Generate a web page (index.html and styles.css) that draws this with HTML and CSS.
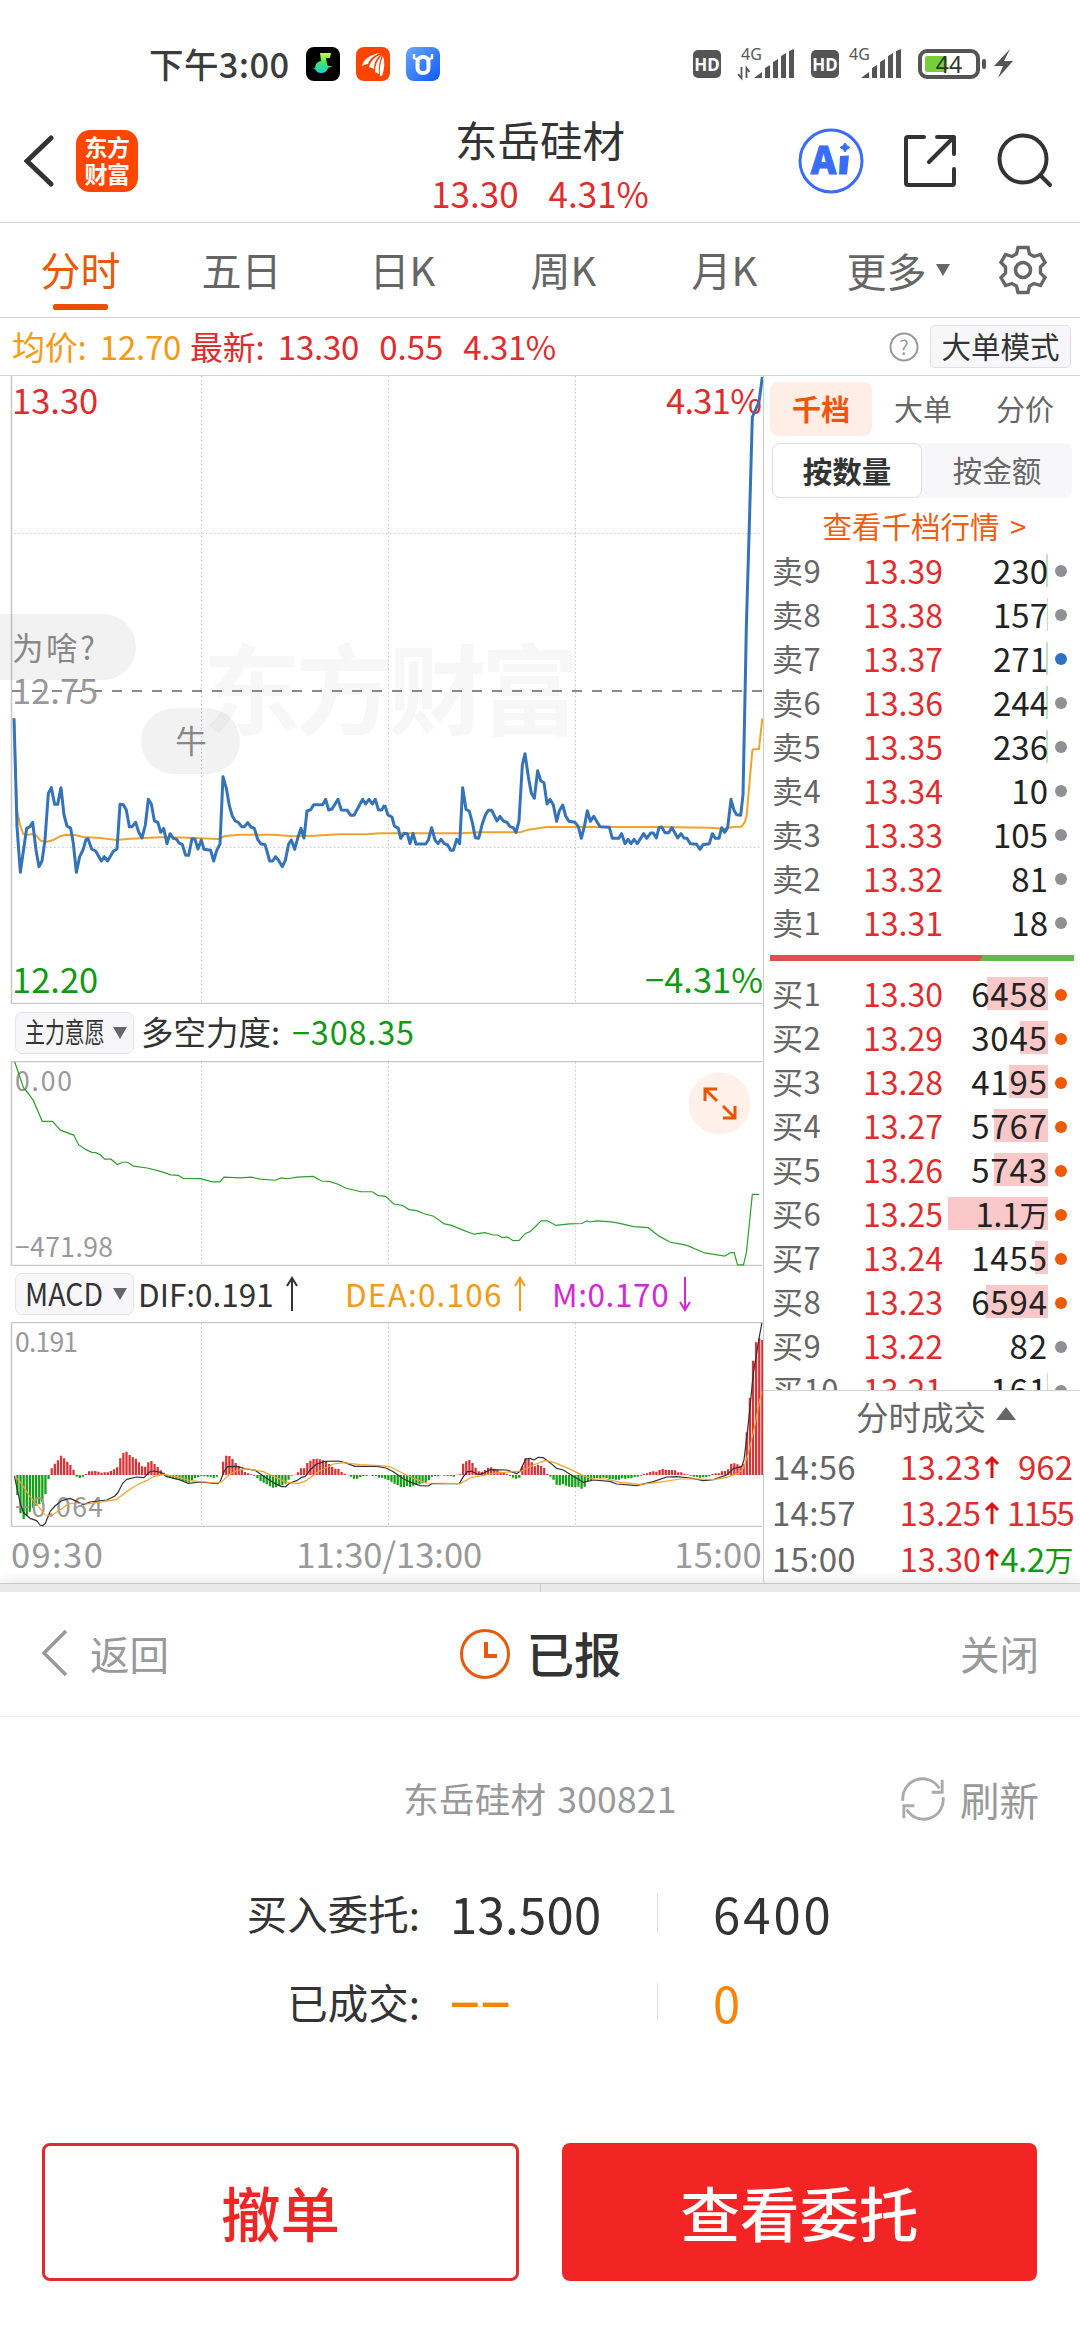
FILE: index.html
```html
<!DOCTYPE html>
<html lang="zh-CN">
<head>
<meta charset="utf-8">
<title>东岳硅材 300821</title>
<link rel="stylesheet" href="styles.css">
</head>
<body>
<div class="statusbar">
  <span class="clock">下午3:00</span>
  <svg class="app" viewBox="0 0 34 34"><defs><linearGradient id="gm" x1="0" y1="0" x2="0" y2="1"><stop offset="0" stop-color="#d4f53c"/><stop offset=".5" stop-color="#3be860"/><stop offset="1" stop-color="#22c8f0"/></linearGradient></defs><rect width="34" height="34" rx="8" fill="#000"/><path d="M14 6h11l-1 5h-4l1 6 1 2h5l-5 2a7 7 0 0 1-13 1l-3-1h3a7 7 0 0 1 6-7z" fill="url(#gm)"/></svg>
  <svg class="app" viewBox="0 0 34 34"><rect width="34" height="34" rx="8" fill="#ff4400"/><path d="M6 19Q8 9 24 6 14 10 12 17q-3 0-6 2zM13 20Q15 12 25 7 18 13 18 22zM19 25q0-10 7-17-4 9-3 19zM24 29q-1-11 3-20 3 9-1 20z" fill="#fff"/></svg>
  <svg class="app" viewBox="0 0 34 34"><defs><linearGradient id="gb" x1="0" y1="0" x2="1" y2="1"><stop offset="0" stop-color="#6aa6fb"/><stop offset="1" stop-color="#0d5bf2"/></linearGradient></defs><rect width="34" height="34" rx="8" fill="url(#gb)"/><path d="M8 7v4q4 1 4 5M26 7v4q-4 1-4 5" fill="none" stroke="#fff" stroke-width="2.400"/><rect x="11.500" y="10" width="11" height="16" rx="5" fill="none" stroke="#fff" stroke-width="4"/></svg>
  <span class="grow"></span>
  <span class="hd">HD</span>
  <svg class="sig first" viewBox="0 -8 58 50"><text x="4" y="13">4G</text><path d="M4.500 21v10M1 27l3.500 4V20M9.500 31V21l3 4" fill="none" stroke="#555" stroke-width="1.800"/><path d="M17 31l8-6v6zM28 31V21l5-3v13zM36 31V15l5-3v19zM44 31V9l5-3v25zM52 31V4l5-2v29z"/></svg>
  <span class="hd">HD</span>
  <svg class="sig second" viewBox="0 -8 54 50"><text x="0" y="13">4G</text><path d="M12 31l8-6v6zM23 31V21l5-3v13zM31 31V15l5-3v19zM39 31V9l5-3v25zM47 31V4l5-2v29z"/></svg>
  <svg class="batt" viewBox="0 0 96 32"><rect x="2" y="3" width="58" height="26" rx="7" fill="none" stroke="#555" stroke-width="4"/><rect x="7" y="8" width="22" height="16" rx="2" fill="#76ce3b"/><rect x="64" y="11" width="4" height="10" rx="2" fill="#555"/><path d="M92 1L76 18h9l-5 12 15-17h-9z" fill="#555"/><text x="31" y="25" text-anchor="middle">44</text></svg>
</div>

<header class="header">
  <svg class="back" viewBox="0 0 30 52"><path d="M27 3L3 26 27 49" fill="none" stroke="#333" stroke-width="5" stroke-linecap="round"/></svg>
  <div class="logo">东方<br>财富</div>
  <div class="title"><h1>东岳硅材</h1><p><span>13.30</span><span>4.31%</span></p></div>
  <svg class="actions" viewBox="0 0 260 66">
    <circle cx="37" cy="33" r="31" fill="none" stroke="#3a6cf4" stroke-width="3"/>
    <text x="17" y="46" class="ai">A</text><path d="M46 28l9-.5-2 19h-8z" fill="#3a6cf4"/><path d="M51 15q1.500 3.500 5 4.500-3.500 1-5 4.500-1.500-3.500-5-4.500 3.500-1 5-4.500z" fill="#3a6cf4" stroke="#3a6cf4"/>
    <g fill="none" stroke="#333" stroke-width="4" stroke-linecap="round" stroke-linejoin="round"><path d="M130 9h-16q-2 0-2 2v44q0 2 2 2h44q2 0 2-2V41M143 9h17v17M159 10L135 34"/><circle cx="229" cy="31" r="23.500"/><path d="M246 47l10 10"/></g>
  </svg>
</header>

<nav class="tabs">
  <span class="tab on">分时</span><span class="tab">五日</span><span class="tab">日K</span><span class="tab">周K</span><span class="tab">月K</span><span class="tab more">更多<i class="tri"></i></span>
  <svg class="gear" viewBox="-25 -25 50 50"><path d="M-5-22.500H5L6.500-16 11-13.500 17.500-15.500 22-7.500 17.500-3V3L22 7.500 17.500 15.500 11 13.500 6.500 16 5 22.500H-5L-6.500 16-11 13.500-17.500 15.500-22 7.500-17.500 3V-3L-22-7.500-17.500-15.500-11-13.500-6.500-16z" fill="none" stroke="#666" stroke-width="3.400"/><circle r="7.500" fill="none" stroke="#666" stroke-width="3.600"/></svg>
</nav>

<div class="quote">
  <span class="avg">均价: 12.70</span><span class="last">最新: 13.30</span><span class="chg">0.55</span><span class="pct">4.31%</span>
  <span class="grow"></span>
  <svg class="help" viewBox="0 0 30 30"><circle cx="15" cy="15" r="13.500" fill="none" stroke="#999" stroke-width="2"/><text x="15" y="22.500" text-anchor="middle">?</text></svg>
  <span class="mode">大单模式</span>
</div>

<main class="main">
  <section class="charts">
    <svg class="c1" viewBox="0 376 763 628">
      <text class="wm" x="391" y="727" text-anchor="middle" textLength="376">东方财富</text>
      <g class="grid"><path d="M201.500 376V1003M388.500 376V1003M575.500 376V1003M14 533.500H762M14 847.500H762"/></g>
      <path class="frame" d="M11.500 376V1003.500H762"/>
      <path d="M12 691H762" stroke="#888" stroke-width="2" stroke-dasharray="10 10"/>
      <text class="ax gray" x="12" y="704">12.75</text>
      <text class="ax red" x="12" y="414">13.30</text>
      <text class="ax red" x="762" y="414" text-anchor="end" textLength="96">4.31%</text>
      <text class="ax green" x="12" y="993">12.20</text>
      <text class="ax green" x="763" y="993" text-anchor="end">−4.31%</text>
      <g class="bubble"><rect x="-40" y="614" width="176" height="66" rx="33"/><text x="12" y="660" textLength="83">为啥?</text><rect x="141" y="708" width="99" height="66" rx="33"/><text x="191" y="753" text-anchor="middle">牛</text></g>
      <g class="avgline">
        <polyline transform="translate(0 680) scale(.33333)" points="42,115 51,390 60,435 70,462 80,465 98,462 110,468 122,482 140,485 158,481 180,469 200,464 225,465 250,471 300,474 350,480 390,476 480,472 520,472 600,475 655,477 675,468 720,464 820,464 880,469 940,467 1020,463 1100,463 1140,460 1200,460"/>
        <polyline transform="translate(380 680) scale(.33333)" points="60,460 240,460 300,457 420,457 445,449 500,441 840,441 990,443 1030,446 1060,441 1085,440 1095,425 1100,405 1117,212 1120,208 1137,207 1147,115"/>
      </g>
      <g class="priceline">
        <polyline transform="translate(0 680) scale(.33333)" points="42,115 51,440 61,577 80,445 90,440 98,427 108,510 117,560 126,543 135,480 145,340 154,323 164,373 173,373 183,323 192,405 201,438 212,445 220,490 229,577 239,530 249,510 258,478 264,476 275,507 287,513 304,543 313,530 323,543 340,514 351,507 360,373 370,374 379,390 388,440 396,440 407,427 416,456 426,474 436,435 445,358 454,372 463,422 474,428 482,457 491,445 501,491 510,461 520,475 530,478 537,489 547,494 557,526 566,526 576,476 585,478 594,507 604,480 612,508 632,511 641,543 650,512 660,492 669,290 679,325 688,377 697,408 706,423 715,427 725,440 733,440 743,428 753,441 763,445 773,478 782,491 795,494 800,510 809,543 818,543 827,530 837,543 847,560 856,541 866,492 874,480 884,508 893,475 903,445 912,474 921,393 932,389 941,374 968,374 977,358 986,390 996,387 1014,358 1024,390 1042,391 1052,406 1062,406 1088,358 1097,372 1107,358 1117,372 1126,358 1135,389 1145,390 1154,375"/>
        <polyline transform="translate(380 680) scale(.33333)" points="14,375 24,405 36,411 43,438 55,445 62,475 72,460 82,461 90,491 99,460 108,492 137,492 145,480 155,443 165,480 174,491 183,478 193,491 203,495 212,511 220,511 230,478 239,491 248,323 258,388 268,394 277,428 286,473 296,475 306,435 316,405 325,391 335,391 351,423 360,409 370,423 381,427 390,440 400,443 408,457 417,423 427,255 435,221 445,290 454,340 463,355 473,272 482,302 492,308 501,372 510,358 520,375 530,424 538,392 548,375 557,408 567,424 585,427 595,440 604,475 613,440 622,392 631,424 641,409 660,440 688,442 697,475 716,475 725,461 735,491 744,478 753,491 762,478 772,491 791,461 800,475 812,459 820,459 829,474 837,443 845,441 855,458 866,458 876,443 893,474 903,461 912,474 921,475 931,491 950,493 960,508 969,494 988,491 997,461 1006,475 1017,475 1025,443 1034,457 1043,443 1053,358 1062,391 1070,404 1082,406 1089,345 1096,0 1099,-159 1108,-465 1117,-789 1137,-834 1147,-909"/>
      </g>
    </svg>

    <div class="ind">
      <span class="pick"><b class="cjk">主力意愿</b><i class="tri"></i></span>
      <span class="lbl">多空力度:</span><span class="green">−308.35</span>
    </div>
    <svg class="c2" viewBox="0 1061 763 205">
      <path class="frame" d="M762 1061.500H11.500V1265.500H762"/>
      <g class="grid"><path d="M201.500 1062V1265M388.500 1062V1265M575.500 1062V1265"/></g>
      <circle cx="719.500" cy="1103.500" r="31" fill="#fff0e9"/>
      <path d="M705 1101v-12h12M706 1090l11 11M735 1106v12h-12M734 1117l-11-11" fill="none" stroke="#ea5504" stroke-width="3"/>
      <text class="sm" x="15" y="1091" textLength="57">0.00</text><text class="sm" x="15" y="1257" textLength="98">−471.98</text>
      <polyline class="force" transform="translate(0 1000) scale(.49107 .3827)" points="30,162 48,230 57,243 68,263 86,317 107,317 123,340 150,353 160,378 175,391 187,398 195,399 205,405 213,416 226,416 239,430 250,424 260,424 272,434 300,439 325,447 348,457 363,458 373,466 408,467 432,475 448,475 456,463 490,465 512,463 530,468 560,471 573,465 585,467 605,463 638,461 655,473 670,474 690,482 705,492 735,501 758,501 770,511 785,513 802,533 820,537 832,547 850,551 862,558 883,565 905,585 920,589 940,600 965,612 987,608 1005,614 1014,614 1023,621 1033,619 1045,629 1057,628 1070,610 1080,605 1102,577 1115,577 1132,589 1160,585 1185,584 1195,577 1202,580 1215,577 1245,580 1260,583 1290,592 1320,595 1342,617 1365,633 1387,638 1400,642 1435,661 1476,669 1488,660 1495,660 1502,692 1514,692 1520,660 1532,508 1546,508"/>
    </svg>

    <div class="ind macd">
      <span class="pick"><b class="lat">MACD</b><i class="tri"></i></span>
      <span class="dif">DIF:0.191</span><svg class="arr" viewBox="0 0 14 36"><path d="M7 35V2M2 10l5-8 5 8" stroke="#333"/></svg>
      <span class="dea">DEA:0.106</span><svg class="arr" viewBox="0 0 14 36"><path d="M7 35V2M2 10l5-8 5 8" stroke="#f39a16"/></svg>
      <span class="mm">M:0.170</span><svg class="arr" viewBox="0 0 14 36"><path d="M7 1v33M2 26l5 8 5-8" stroke="#d428d4"/></svg>
    </div>
    <svg class="c3" viewBox="0 1322 763 205">
      <path class="frame" d="M762 1322.500H11.500V1526.500H762"/>
      <g class="grid"><path d="M201.500 1323V1526M388.500 1323V1526M575.500 1323V1526"/></g>
      <text class="sm" x="15" y="1352" textLength="63">0.191</text>
      <path id="up" fill="none" stroke="#d83438" stroke-width="2.300"/><path id="down" fill="none" stroke="#15a015" stroke-width="2.300"/>
      <text class="sm" x="15" y="1517" textLength="88">−0.064</text>
      <g class="thin black">
        <polyline transform="translate(0 1380) scale(.33333)" points="43,287 52,330 62,375 72,400 90,415 110,422 120,435 128,437 136,430 150,395 165,378 185,362 210,355 225,362 250,374 270,366 320,360 345,348 355,336 368,310 380,298 410,291 432,293 448,276 462,273 485,278 500,290 540,300 565,310 600,306 652,311 660,305 672,275 683,260 710,259 740,267 765,271 790,288 820,308 845,320 857,320 870,309 890,302 905,292 915,290 930,270 950,252 975,244 1015,243 1035,248 1065,259 1130,259 1158,264"/>
        <polyline transform="translate(380 1310) scale(.33333)" points="18,474 40,485 70,506 90,516 120,527 145,528 155,521 238,521 250,500 262,485 275,484 295,494 310,490 330,479 380,480 410,491 420,484 437,447 450,445 462,450 475,442 490,443 510,458 530,475 550,480 570,493 590,505 610,517 640,510 690,514 710,522 770,527 820,515 860,501 890,500 930,504 970,512 1000,509 1040,495 1060,476 1085,470 1092,450 1105,340 1120,190 1137,85 1146,38"/>
      </g>
      <g class="thin orange">
        <polyline transform="translate(0 1380) scale(.33333)" points="43,287 60,305 90,350 120,385 135,405 155,406 180,390 205,372 225,369 260,372 300,366 330,362 350,358 390,328 420,310 440,302 460,290 490,283 530,290 570,302 650,309 665,305 690,282 710,272 740,266 790,275 840,298 865,308 895,311 920,301 960,272 1000,252 1030,248 1080,254 1140,257 1170,260"/>
        <polyline transform="translate(380 1310) scale(.33333)" points="30,470 60,485 100,505 140,519 240,521 275,502 300,498 340,490 400,485 425,483 460,465 495,452 515,455 560,473 610,497 640,507 680,507 720,517 780,523 830,518 900,507 960,507 1000,509 1040,502 1075,490 1090,475 1105,430 1125,345 1137,280 1146,244"/>
      </g>
    </svg>
    <div class="times"><span class="t0">09:30</span><span>11:30/13:00</span><span class="t1">15:00</span></div>
  </section>

  <aside class="book">
    <div class="btabs"><span class="on">千档</span><span>大单</span><span>分价</span></div>
    <div class="seg"><span class="on">按数量</span><span>按金额</span></div>
    <div class="link">查看千档行情 <i>&gt;</i></div>
    <div class="rows sell">
      <div class="row"><span>卖9</span><em>13.39</em><b><i style="width:2px"></i>230</b><u></u></div>
      <div class="row"><span>卖8</span><em>13.38</em><b><i style="width:1px"></i>157</b><u></u></div>
      <div class="row"><span>卖7</span><em>13.37</em><b><i style="width:2px"></i>271</b><u class="bl"></u></div>
      <div class="row"><span>卖6</span><em>13.36</em><b><i style="width:2px"></i>244</b><u></u></div>
      <div class="row"><span>卖5</span><em>13.35</em><b><i style="width:2px"></i>236</b><u></u></div>
      <div class="row"><span>卖4</span><em>13.34</em><b>10</b><u></u></div>
      <div class="row"><span>卖3</span><em>13.33</em><b>105</b><u></u></div>
      <div class="row"><span>卖2</span><em>13.32</em><b>81</b><u></u></div>
      <div class="row"><span>卖1</span><em>13.31</em><b>18</b><u></u></div>
    </div>
    <div class="ratio"></div>
    <div class="rows buy">
      <div class="row"><span>买1</span><em>13.30</em><b><i style="width:61px"></i>6458</b><u class="or"></u></div>
      <div class="row"><span>买2</span><em>13.29</em><b><i style="width:28px"></i>3045</b><u class="or"></u></div>
      <div class="row"><span>买3</span><em>13.28</em><b><i style="width:39px"></i>4195</b><u class="or"></u></div>
      <div class="row"><span>买4</span><em>13.27</em><b><i style="width:54px"></i>5767</b><u class="or"></u></div>
      <div class="row"><span>买5</span><em>13.26</em><b><i style="width:54px"></i>5743</b><u class="or"></u></div>
      <div class="row"><span>买6</span><em>13.25</em><b class="wan"><i style="width:100px"></i>1.1<small>万</small></b><u class="or"></u></div>
      <div class="row"><span>买7</span><em>13.24</em><b><i style="width:13px"></i>1455</b><u class="or"></u></div>
      <div class="row"><span>买8</span><em>13.23</em><b><i style="width:62px"></i>6594</b><u class="or"></u></div>
      <div class="row"><span>买9</span><em>13.22</em><b>82</b><u></u></div>
      <div class="row"><span>买10</span><em>13.21</em><b><i style="width:1px"></i>161</b><u></u></div>
    </div>
    <div class="deals">
      <div class="dh">分时成交<i></i></div>
      <div class="deal"><span>14:56</span><em>13.23</em><svg viewBox="0 0 16 24"><path d="M8 23V3M2 9l6-6 6 6"/></svg><b>962</b></div>
      <div class="deal"><span>14:57</span><em>13.25</em><svg viewBox="0 0 16 24"><path d="M8 23V3M2 9l6-6 6 6"/></svg><b class="tight">1155</b></div>
      <div class="deal"><span>15:00</span><em>13.30</em><svg viewBox="0 0 16 24"><path d="M8 23V3M2 9l6-6 6 6"/></svg><b class="green">4.2<small>万</small></b></div>
    </div>
  </aside>
</main>
<div class="shade"><i></i></div>

<section class="sheet">
  <div class="shead">
    <span class="ret"><svg viewBox="0 0 28 50"><path d="M25 3L3 25 25 47" fill="none" stroke="#999" stroke-width="3.500"/></svg>返回</span>
    <span class="state"><svg viewBox="0 0 52 52"><circle cx="26" cy="26" r="23.500" fill="none" stroke="#e8590c" stroke-width="3"/><path d="M27 14v14h11" fill="none" stroke="#e8590c" stroke-width="4"/></svg><b>已报</b></span>
    <span class="close">关闭</span>
  </div>
  <div class="stock">
    <span class="name">东岳硅材 300821</span>
    <span class="refresh"><svg viewBox="0 0 48 48"><path d="M3 26A20.500 20.500 0 0 1 41 13M44 4v13H33M45 22A20.500 20.500 0 0 1 7 35M4 44V31h11" fill="none" stroke="#aaa" stroke-width="3"/></svg>刷新</span>
  </div>
  <div class="order"><span>买入委托:</span><b>13.500</b><i></i><b>6400</b></div>
  <div class="order done"><span>已成交:</span><b class="dash">−−</b><i></i><b>0</b></div>
  <div class="btns"><button class="cancel">撤单</button><button class="view">查看委托</button></div>
</section>
<script src="bars.js"></script>
</body>
</html>
```

FILE: bars.js
```js
// MACD histogram, one value per trading minute (thirds of a pixel above the zero line)
const macd = [0,-60,-115,-132,-122,-110,-98,-92,-88,-80,-57,-12,20,34,44,58,50,40,30,16,
-5,-9,-5,3,11,11,12,10,7,8,8,12,17,23,50,66,70,60,53,49,38,26,25,38,42,33,24,14,7,-5,-8,-10,-13,-15,-18,-20,-22,-16,-9,-7,
-3,-4,-5,-5,-8,-5,0,40,58,57,48,36,27,16,9,5,2,-3,-10,-18,-23,-28,-34,-38,-37,-33,-31,-26,-14,-2,1,8,20,20,36,43,48,49,47,44,
41,33,24,19,18,9,4,1,-5,-11,-11,-6,-3,-3,-1,-3,-3,-8,-8,-11,-15,-20,-26,-31,-36,-36,-33,-36,-32,-30,-27,-25,-23,-16,-5,-3,-4,-1,-2,-2,
-3,-5,1,2,34,41,45,36,22,11,10,15,22,23,19,15,10,7,3,-3,-8,-11,-8,26,50,49,38,26,31,27,21,3,-5,-14,-29,-31,-28,-32,-35,-36,
-36,-35,-41,-35,-18,-15,-10,-9,-10,-8,-9,-12,-13,-14,-14,-10,-11,-10,-10,-6,-5,-2,3,5,9,11,10,15,18,16,15,15,14,8,8,4,2,-2,-5,-6,
-8,-7,-6,-4,3,5,5,11,12,17,34,35,32,28,32,128,232,343,398,410,405];
const zero = 1475;
let up = "", down = "";
macd.forEach((v, i) => {
  if (!v) return;
  const bar = `M${(14.3 + 3.117 * i).toFixed(2)} ${zero}V${(zero - v / 3).toFixed(1)}`;
  if (v > 0) up += bar; else down += bar;
});
document.getElementById("up").setAttribute("d", up);
document.getElementById("down").setAttribute("d", down);
```

FILE: styles.css
```css
* { box-sizing: border-box; margin: 0; padding: 0; }
body { width: 1080px; height: 2340px; background: #fff; color: #333; font-family: "Noto Sans CJK SC", "Noto Sans", sans-serif; overflow: hidden; line-height: 1; }
svg { display: block; flex: none; }
i, em, u { font-style: normal; text-decoration: none; }
span, b, em { white-space: nowrap; }
.grow { flex: 1; }
.green { color: #129912; }

.statusbar { display: flex; align-items: center; height: 100px; padding: 28px 0 0 149px; }
.clock { width: 157px; font-size: 34.500px; color: #3c3c3c; line-height: 60px; font-weight: 500; letter-spacing: .4px; margin-top: -2px; }
.app { width: 34px; height: 34px; margin-right: 16px; }
.hd { width: 28px; height: 28px; border-radius: 5px; background: #555; color: #fff; font: bold 17px/29px "Noto Sans", sans-serif; text-align: center; }
.sig text { font-size: 16px; fill: #555; font-family: "Noto Sans", sans-serif; }
.sig { fill: #555; height: 50px; }
.sig.first { width: 58px; margin: 0 16px; }
.sig.second { width: 54px; margin: 0 15px 0 10px; }
.batt { width: 96px; height: 32px; margin-right: 66px; }
.batt text { font: 23px "Noto Sans", sans-serif; fill: #333; }

.header { display: flex; align-items: center; height: 123px; border-bottom: 1px solid #d4d4d4; }
.back { width: 30px; height: 52px; margin-left: 24px; }
.logo { width: 62px; height: 62px; margin-left: 22px; border-radius: 14px; background: #ff4600; color: #fff; font-size: 23px; font-weight: 700; line-height: 27px; text-align: center; padding-top: 3px; letter-spacing: -.5px; }
.title { flex: 1; margin-left: 148px; width: 0; text-align: center; }
.title h1 { font-size: 42.500px; font-weight: 400; line-height: 58px; height: 58px; margin-top: 6px; }
.title p { display: flex; justify-content: center; gap: 30px; font-size: 35px; line-height: 50px; color: #e02c2c; }
.actions { width: 260px; height: 66px; margin-right: 26px; margin-left: 0; }
.ai { font: 900 38px "Noto Sans CJK SC", sans-serif; fill: #3a6cf4; stroke: #3a6cf4; stroke-width: 1; }

.tabs { display: flex; align-items: center; height: 95px; border-bottom: 1px solid #d4d4d4; }
.tab { width: 161px; height: 94px; display: flex; flex-direction: column; align-items: center; font-size: 40px; line-height: 92px; color: #666; }
.tab.on { color: #e8590c; }
.tab.on::after { content: ""; width: 55px; height: 6px; border-radius: 2px; background: #e85208; margin-top: -11px; }
.tab.more { flex-direction: row; justify-content: center; gap: 9px; width: 186px; }
.tri { width: 0; height: 0; border: 7px solid transparent; border-top: 12px solid #666; border-bottom: 0; }
.gear { width: 50px; height: 50px; margin-left: 7px; margin-top: -1px; }

.quote { display: flex; align-items: center; height: 58px; border-bottom: 1px solid #d4d4d4; padding: 0 9px 0 12px; font-size: 33px; color: #e02c2c; line-height: 54px; }
.quote > span { margin-top: -2px; }
.avg { color: #f39a16; width: 178px; }
.avg, .last { word-spacing: 6px; letter-spacing: -.2px; }
.chg { margin-left: 20px; }
.pct { margin-left: 20px; letter-spacing: -.4px; }
.help { width: 30px; height: 30px; margin-right: 11px; }
.help text { font-size: 20px; fill: #999; }
.quote > .mode { width: 141px; height: 43px; border: 1px solid #e0e1e6; border-radius: 5px; background: #f7f7fa; font-size: 29.500px; line-height: 38px; color: #333; text-align: center; margin-top: 0; }

.main { display: flex; height: 1208px; border-bottom: 1px solid #d0d0d4; }
.charts { width: 764px; border-right: 1px solid #ccc; }
.c1 { width: 763px; height: 628px; }
.c2, .c3 { width: 763px; height: 205px; }
.frame { fill: none; stroke: #c8c8c8; stroke-width: 1.500; }
.grid { fill: none; stroke: #c8c8c8; stroke-width: 1; stroke-dasharray: 1.500 2.500; }
.ax { font-size: 34.500px; }
.sm { font-size: 26.500px; fill: #999; }
.ax.red { fill: #e02c2c; } .ax.green { fill: #129912; } .ax.gray { fill: #999; }
.wm { font-size: 98px; font-weight: 700; fill: #f7f7f7; }
.bubble rect { fill: rgba(0,0,0,.05); }
.bubble text { font-size: 31.500px; fill: #888; }
.avgline, .priceline, .thin { fill: none; stroke-linejoin: round; }
polyline { vector-effect: non-scaling-stroke; fill: none; }
.avgline { stroke: #f0a32c; stroke-width: 2; }
.priceline { stroke: #3573b8; stroke-width: 3; }
.force { stroke: #2ba02b; stroke-width: 1.200; }
.thin { stroke-width: 1.200; }
.black { stroke: #333; } .orange { stroke: #f5a12c; }

.ind { display: flex; align-items: center; height: 57px; padding-left: 15px; font-size: 32.500px; line-height: 50px; }
.ind.macd { height: 56px; font-size: 31.500px; }
.pick { display: flex; align-items: center; width: 119px; height: 42px; border: 1px solid #e3e4e8; border-radius: 7px; background: #f7f7fa; padding-left: 9px; }
.pick .tri { margin-left: 9px; border-width: 12px 7px 0; }
.pick b { font-weight: 400; width: 79px; line-height: 38px; transform-origin: 0 50%; margin-top: -3px; }
.cjk { font-size: 28px; transform: scaleX(.71); }
.lat { font-size: 31px; transform: scaleX(.92); }
.lbl { margin: -3px 9px 0 7px; width: 142px; }
.ind > .green { margin-top: -3px; letter-spacing: .8px; }
.dif { margin-left: 4px; width: 147px; }
.dea { margin-left: 46px; width: 168px; color: #f39a16; letter-spacing: 1.200px; }
.mm { margin-left: 25px; width: 126px; color: #d428d4; letter-spacing: .6px; }
.macd > span { margin-top: -2px; }
.macd .pick { margin-top: 0; }
.arr { width: 14px; height: 36px; fill: none; stroke-width: 2; }
.arr path { fill: none; }
.times { display: flex; justify-content: space-between; padding: 0 1px 0 11px; height: 54px; font-size: 34.500px; line-height: 52px; color: #999; }
.t0 { letter-spacing: 1.400px; }
.t1 { letter-spacing: .3px; }

.book { flex: 1; padding: 6px 0 0 6px; color: #666; font-size: 33px; display: flex; flex-direction: column; }
.btabs { display: flex; height: 54px; font-size: 29px; line-height: 52px; }
.btabs span { width: 102px; text-align: center; }
.btabs .on { background: #ffeee5; border-radius: 8px; color: #f0560a; font-weight: 700; }
.seg { display: flex; width: 300px; height: 55px; margin: 7px 0 0 2px; border-radius: 8px; background: #f7f7fa; font-size: 29.500px; line-height: 53px; }
.seg span { width: 150px; text-align: center; }
.seg .on { background: #fff; border: 1px solid #dfe0e5; border-radius: 8px; color: #333; font-weight: 700; }
.link { text-align: center; font-size: 29.500px; line-height: 53px; height: 50px; color: #ee5f12; margin: 1px 0 0; padding-right: 1px; word-spacing: 4px; }
.row { display: flex; align-items: center; height: 44px; line-height: 44px; }
.row > * { margin-top: -4px; }
.row span { width: 60px; padding-left: 2px; font-size: 31px; letter-spacing: .5px; }
.row em { width: 113px; text-align: right; color: #e02c2c; font-size: 32px; }
.row b { width: 105px; text-align: right; font-weight: 400; color: #222; position: relative; isolation: isolate; }
.buy .row b { letter-spacing: .9px; }
.buy .row b.wan { letter-spacing: -.6px; }
.row small, .deal small { font-size: 29px; }
.row b i { position: absolute; right: 0; top: 6px; height: 33px; z-index: -1; background: #fac8c8; }
.sell b i { background: #bfe5bf; }
.row u { width: 12px; height: 12px; border-radius: 50%; background: #8f8f96; margin: 0 0 1px 7px; }
.row u.bl { background: #2f72c4; } .row u.or { background: #ec5a04; }
.sell { height: 404px; margin-top: 0; padding-top: 1px; }
.ratio { width: 304px; height: 6px; margin-top: 5px; background: linear-gradient(120deg, #de5050 69.300%, #62b84c 69.300%); }
.buy { height: 431px; padding-top: 12px; overflow: hidden; }
.deals { margin-left: -6px; border-top: 1px solid #d4d4d4; padding: 0 0 0 8px; }
.dh { height: 54px; line-height: 46px; font-size: 32.500px; display: flex; align-items: center; padding-left: 84px; gap: 10px; padding-bottom: 4px; }
.dh i { border: 10px solid transparent; border-bottom: 13px solid #666; border-top: 0; margin-top: -6px; }
.deal { display: flex; align-items: center; height: 46px; line-height: 42px; }
.deal > * { margin-top: -4px; }
.deal span { width: 88px; letter-spacing: .3px; }
.deal em { width: 121px; text-align: right; color: #e02c2c; font-size: 32.500px; }
.deal svg { width: 16px; height: 24px; margin-left: 3px; fill: none; stroke: #e00f0f; stroke-width: 3; margin-top: -3px; }
.deal b { width: 73px; text-align: right; font-weight: 400; color: #e02c2c; }
.deal b.tight { letter-spacing: -1.800px; }
.deal b.green { color: #129912; letter-spacing: -.5px; }

.shade { height: 8px; background: #e9e9e9; display: flex; justify-content: center; box-shadow: 0 -4px 12px rgba(0,0,0,.1); }
.shade i { width: 1px; background: #ccc; }
.sheet { background: #fff; height: 748px; position: relative; }
.shead { display: grid; grid-template-columns: 1fr auto 1fr; align-items: center; height: 125px; border-bottom: 1px solid #ececec; padding: 0 41px; color: #999; font-size: 39.500px; }
.shead span { display: flex; align-items: center; line-height: 52px; }
.shead .ret { padding-bottom: 2px; }
.ret svg { width: 28px; height: 50px; margin-right: 21px; }
.state { color: #333; font-size: 47.500px; }
.state b { font-weight: 500; line-height: 56px; margin-top: -3px; }
.state svg { width: 52px; height: 52px; margin-right: 16px; }
.shead .close { justify-content: flex-end; padding-bottom: 2px; }
.stock { display: grid; grid-template-columns: 1fr auto 1fr; align-items: center; height: 166px; padding: 0 41px; color: #999; }
.name { grid-column: 2; font-size: 35.500px; line-height: 50px; word-spacing: 3px; letter-spacing: .2px; margin-top: -4px; }
.refresh { display: flex; align-items: center; justify-content: flex-end; font-size: 39.500px; line-height: 54px; gap: 14px; margin-top: -3px; }
.refresh svg { width: 46px; height: 46px; }
.order { display: grid; grid-template-columns: 420px 237px 56px auto; align-items: center; height: 89px; line-height: 58px; margin-top: -15px; }
.order span { font-size: 40.500px; text-align: right; }
.order b { font-size: 49px; font-weight: 400; margin-left: 30px; letter-spacing: .3px; }
.order b:last-child { margin-left: 0; letter-spacing: 3px; }
.order i { width: 1px; height: 38px; background: #ddd; }
.done { margin-top: 0; }
.done b { color: #f98404; }
.done b.dash { font-weight: 500; font-size: 52px; letter-spacing: 1px; }
.btns { display: grid; grid-template-columns: 477px 475px; gap: 43px; padding: 0 42px; margin-top: 97px; }
.btns button { height: 138px; border-radius: 8px; font: 500 59.500px/130px "Noto Sans CJK SC", sans-serif; padding-bottom: 3px; }
.cancel { background: #fff; border: 3px solid #dc2c30; color: #ee2626; }
.view { background: #f32424; border: 0; color: #fff; }
```
